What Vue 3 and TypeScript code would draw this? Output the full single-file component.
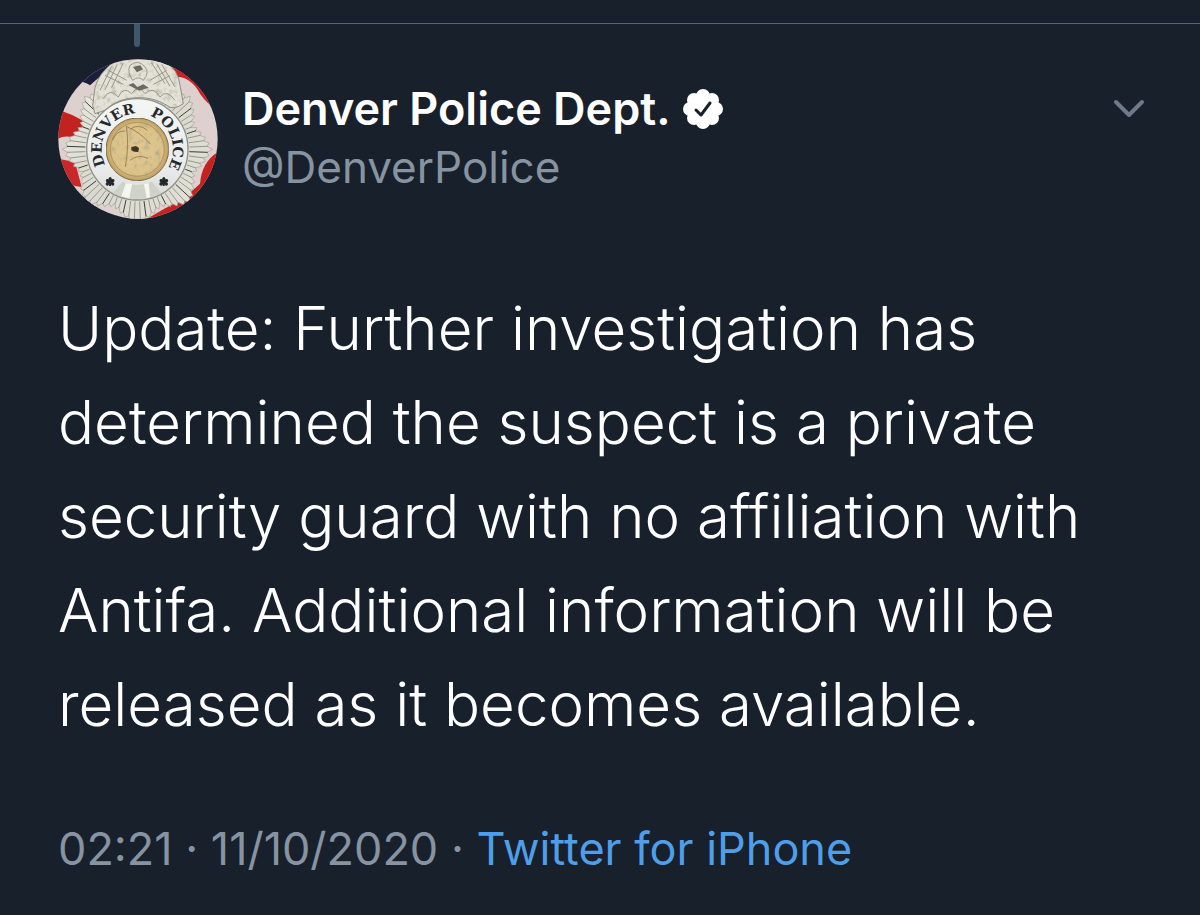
<script setup lang="ts">
interface Ray {
  x1: number
  y1: number
  x2: number
  y2: number
}

const lines: string[] = [
  'Update: Further investigation has',
  'determined the suspect is a private',
  'security guard with no affiliation with',
  'Antifa. Additional information will be',
  'released as it becomes available.',
]

const cx = 262
const cy = 297

function point(angle: number, radius: number): [number, number] {
  const a = (angle * Math.PI) / 180
  return [Math.round(cx + Math.cos(a) * radius), Math.round(cy + Math.sin(a) * radius)]
}

// Radius of the eight-pointed badge at a given angle.
function edge(angle: number): number {
  const fromTip = Math.abs((((angle % 45) + 45) % 45) - 22.5) / 22.5
  return 182 + fromTip * 40
}

const star: string = Array.from({ length: 144 }, (_, i) => {
  const angle = i * 2.5
  const [x, y] = point(angle, edge(angle) + (i % 2 ? -8 : 3))
  return `${x},${y}`
}).join(' ')

const rays: Ray[] = Array.from({ length: 72 }, (_, i) => {
  const angle = i * 5 + 2.5
  const [x1, y1] = point(angle, 156)
  const [x2, y2] = point(angle, edge(angle) - 6)
  return { x1, y1, x2, y2 }
})
</script>

<template>
  <main class="page">
    <div class="thread"><span class="connector"></span></div>
    <article class="tweet">
      <header class="head">
        <svg class="avatar" viewBox="24 26 480 480" role="img" aria-label="Denver Police badge">
          <defs>
            <clipPath id="round"><circle cx="264" cy="266" r="239" /></clipPath>
            <linearGradient id="silver" x1="0" y1="0" x2="1" y2="1">
              <stop offset="0" stop-color="#ecebe3" />
              <stop offset="0.5" stop-color="#dad9cf" />
              <stop offset="1" stop-color="#e4e3da" />
            </linearGradient>
            <linearGradient id="enamel" x1="0" y1="0" x2="0" y2="1">
              <stop offset="0" stop-color="#f4f5f5" />
              <stop offset="0.7" stop-color="#e9ebea" />
              <stop offset="1" stop-color="#d6d9d3" />
            </linearGradient>
            <radialGradient id="gold">
              <stop offset="0" stop-color="#e0c893" />
              <stop offset="0.8" stop-color="#dcc288" />
              <stop offset="1" stop-color="#bd9c5c" />
            </radialGradient>
            <filter id="relief" x="0" y="0" width="1" height="1">
              <feTurbulence type="fractalNoise" baseFrequency="0.06" numOctaves="3" seed="4" />
              <feColorMatrix values="0 0 0 0 0.42  0 0 0 0 0.37  0 0 0 0 0.26  2 0 0 0 -1" />
              <feComposite in2="SourceGraphic" operator="in" result="grain" />
              <feMerge>
                <feMergeNode in="SourceGraphic" />
                <feMergeNode in="grain" />
              </feMerge>
            </filter>
            <path id="ring" d="M262 404A107 107 0 0 1 262 190A107 107 0 0 1 262 404" />
          </defs>
          <g clip-path="url(#round)">
            <rect x="24" y="26" width="480" height="480" fill="#ddd0cf" />
            <path d="M100 26H210L120 105Q95 90 80 95Z" fill="#1c1c3b" />
            <path d="M24 180Q70 190 110 220L95 270Q50 250 24 265Z" fill="#c3231f" />
            <path d="M24 325L75 335L95 410Q60 410 24 370Z" fill="#c9272a" />
            <path d="M365 40Q400 90 490 130L500 20Z" fill="#c81f24" />
            <path d="M370 80Q420 75 450 130Q485 180 504 165V90L420 26H360Z" fill="#c72126" />
            <path d="M504 305Q455 335 450 400L400 445Q340 475 290 506H430Q504 460 504 305Z" fill="#c4221f" />
            <polygon :points="star" fill="url(#silver)" stroke="#a3a194" stroke-width="2" />
            <line
              v-for="(ray, i) in rays"
              :key="i"
              :x1="ray.x1"
              :y1="ray.y1"
              :x2="ray.x2"
              :y2="ray.y2"
              :stroke="i % 4 ? '#98978a' : '#3d3f37'"
              stroke-width="3"
            />
            <path
              d="M128 165L135 112Q145 70 190 36Q264 16 345 34Q385 58 390 105L400 160Q370 182 350 165Q310 140 262 142Q205 142 165 180L135 190Z"
              fill="#e4e2d8"
              stroke="#8c8b7f"
              stroke-width="3"
              filter="url(#relief)"
            />
            <g fill="none" stroke="#99978a" stroke-width="3">
              <path d="M185 48L150 120M202 42L165 118M220 38L185 112M175 60L230 90M165 75L220 102" />
              <path d="M335 42L375 110M320 40L360 108M305 38L345 100M350 60L300 90M360 76L310 102" />
              <path d="M240 45Q265 25 285 50Q300 65 280 90Q265 75 248 90Q230 65 240 45" />
              <path d="M160 145Q180 110 205 140Q220 105 245 130Q265 100 285 130Q310 105 330 140Q350 115 375 150" />
            </g>
            <path d="M249 50l22 -5 8 12-18 9zM235 104l15-6 12 12 18-8 16 10-28 9z" fill="#6b6a5e" />
            <circle cx="262" cy="297" r="152" fill="url(#enamel)" stroke="#8f9086" stroke-width="4" />
            <path d="M218 394L188 428Q262 462 334 428L306 394Q262 415 218 394Z" fill="#cfd2c6" />
            <path d="M228 398L214 438L238 444L246 402ZM282 402L290 444L300 440L296 398Z" fill="#f5f6f0" />
            <circle cx="262" cy="297" r="94" fill="url(#gold)" stroke="#7d6a42" stroke-width="3" filter="url(#relief)" />
            <g fill="none" stroke="#a0844f" stroke-width="3">
              <path d="M229 228Q238 285 226 350M229 228Q270 245 302 282" />
              <path d="M187 270Q200 240 225 242M242 236Q265 218 292 240M240 330Q264 310 294 324" />
              <circle cx="262" cy="297" r="81" stroke-width="2" />
            </g>
            <path d="M244 290l14-3 9 6-2 12-13-1-8-4z" fill="#403728" />
            <text class="badge-text">
              <textPath href="#ring" startOffset="33.4%" text-anchor="middle">DENVER</textPath>
            </text>
            <text class="badge-text">
              <textPath href="#ring" startOffset="69.6%" text-anchor="middle">POLICE</textPath>
            </text>
            <g fill="#25282a">
              <path id="flower" d="M180 392m-3-3a5 5 0 1 1 7 0a5 5 0 1 1 4 7a5 5 0 1 1-5 5v6h-6v-6a5 5 0 1 1-4-5a5 5 0 1 1 4-7Z" />
              <use href="#flower" x="161" />
            </g>
          </g>
        </svg>
        <div class="names">
          <h1 class="name">
            Denver Police Dept.
            <svg class="verified" viewBox="0 0 40 40" role="img" aria-label="Verified account">
              <g fill="#fff">
                <circle cx="20" cy="20" r="15" />
                <circle cx="20" cy="7" r="7" />
                <circle cx="29" cy="11" r="7" />
                <circle cx="33" cy="20" r="7" />
                <circle cx="29" cy="29" r="7" />
                <circle cx="20" cy="33" r="7" />
                <circle cx="11" cy="29" r="7" />
                <circle cx="7" cy="20" r="7" />
                <circle cx="11" cy="11" r="7" />
              </g>
              <path d="M13 21L18 26L27 14" fill="none" stroke="#18202b" stroke-width="3" stroke-linecap="round" stroke-linejoin="round" />
            </svg>
          </h1>
          <span class="handle">@DenverPolice</span>
        </div>
        <button class="more" type="button" aria-label="More options">
          <svg viewBox="0 0 32 20" width="32" height="20">
            <path d="M3 3L16 16L29 3" fill="none" stroke="#6f7a87" stroke-width="4" stroke-linecap="round" stroke-linejoin="round" />
          </svg>
        </button>
      </header>
      <p class="body">
        <template v-for="line in lines" :key="line">{{ line }}<br /></template>
      </p>
      <footer class="meta">
        <time>02:21</time> · <time>11/10/2020</time> · <a class="source" href="#">Twitter for iPhone</a>
      </footer>
    </article>
  </main>
</template>

<style>
body {
  background: #18202b;
}
</style>

<style scoped>
.page {
  padding-top: 23px;
  font-family: Inter, "Liberation Sans", sans-serif;
  color: #fff;
}
.thread {
  height: 35px;
  padding-left: 134px;
  border-top: 1px solid #56626e;
}
.connector {
  display: block;
  width: 6px;
  height: 23px;
  border-radius: 0 0 3px 3px;
  background: #40566a;
}
.tweet {
  padding: 0 55px 32px 58px;
}
.head {
  display: flex;
  align-items: flex-start;
}
.avatar {
  flex: none;
  width: 160px;
  height: 160px;
}
.badge-text {
  font: bold 43px "DejaVu Serif", serif;
  fill: #26292b;
}
.names {
  flex: 1;
  padding: 21px 0 0 24px;
}
.name {
  display: flex;
  align-items: center;
  gap: 12px;
  margin: 0;
  font-size: 45px;
  font-weight: 600;
  line-height: 58px;
}
.verified {
  width: 40px;
  height: 40px;
}
.handle {
  display: block;
  font-size: 44px;
  line-height: 58px;
  color: #8793a1;
}
.more {
  margin-top: 40px;
  padding: 0;
  border: 0;
  background: none;
  cursor: pointer;
}
.more svg {
  display: block;
}
.body {
  margin: 62px 0 0;
  font-size: 60px;
  font-weight: 300;
  line-height: 94px;
}
.meta {
  margin-top: 69px;
  font-size: 45px;
  line-height: 58px;
  color: #8793a1;
}
.source {
  color: #4f9ee9;
  text-decoration: none;
}
</style>
